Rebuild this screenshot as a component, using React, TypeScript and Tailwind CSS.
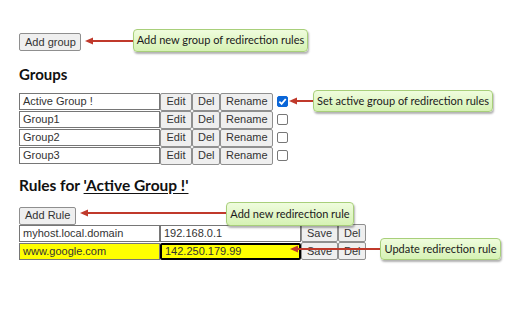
import React from 'react';

const btn =
  "h-[18px] px-[5px] bg-[#efefef] border border-[#8f8f8f] rounded-[2px] text-[11px] leading-none whitespace-nowrap text-[#333] font-['Liberation_Sans',Arial,sans-serif]";
const input =
  "h-[17px] w-[141px] px-[3px] border border-[#767676] text-[11px] leading-none whitespace-nowrap text-[#333] font-['Liberation_Sans',Arial,sans-serif] flex items-center";

function Callout({ text, className }: { text: string; className: string }) {
  return (
    <div
      className={`absolute flex items-center justify-center whitespace-nowrap rounded-[4px] border border-[#a8cf7a] bg-gradient-to-b from-[#effcdd] to-[#d6f2b4] shadow-[1px_2px_2px_rgba(0,0,0,0.3)] text-[11px] text-[#1a1a1a] font-['Lato',sans-serif] ${className}`}
    >
      {text}
    </div>
  );
}

function Arrow({ x1, x2, y }: { x1: number; x2: number; y: number }) {
  return (
    <svg className="absolute left-0 top-0 pointer-events-none" width={512} height={320}>
      <line x1={x1 + 6} y1={y} x2={x2} y2={y} stroke="#c0392b" strokeWidth={2} />
      <polygon points={`${x1},${y} ${x1 + 8},${y - 3.5} ${x1 + 8},${y + 3.5}`} fill="#c0392b" />
    </svg>
  );
}

const groups = ['Active Group !', 'Group1', 'Group2', 'Group3'];

export default function App() {
  return (
    <div className="relative w-[512px] h-[320px] bg-white overflow-hidden">
      <div className="pl-[19px] pt-[33px] flex flex-col items-start">
        <button className={`${btn} w-[62px] px-0`}>Add group</button>
        <h2 className="mt-[13px] text-[15px] font-bold text-[#111] font-['Lato',sans-serif] leading-[20px]">Groups</h2>
        <div className="mt-[9px] flex flex-col gap-[0.5px]">
          {groups.map((g, i) => (
            <div key={g} className="flex items-center h-[17.5px]">
              <div className={input}>{g}</div>
              <button className={`${btn} w-[32px] px-0`}>Edit</button>
              <button className={`${btn} w-[28px] px-0`}>Del</button>
              <button className={`${btn} w-[53px] px-0`}>Rename</button>
              <span
                className={`ml-[4px] w-[11px] h-[11px] rounded-[2px] border flex items-center justify-center ${
                  i === 0 ? 'bg-[#0a66d8] border-[#0a66d8]' : 'bg-white border-[#777]'
                }`}
              >
                {i === 0 && (
                  <svg width="9" height="9" viewBox="0 0 10 10">
                    <path d="M1.5 5.2 L4 7.6 L8.6 2.2" stroke="white" strokeWidth="2" fill="none" />
                  </svg>
                )}
              </span>
            </div>
          ))}
        </div>
        <h2 className="mt-[10px] text-[15.5px] font-bold text-[#111] font-['Lato',sans-serif] leading-[20px]">
          Rules for <span className="underline underline-offset-2">'Active Group !'</span>
        </h2>
        <button className={`${btn} mt-[12px] w-[57px] px-0`}>Add Rule</button>
        <div className="flex flex-col gap-[1px]">
          <div className="flex items-center h-[17px]">
            <div className={input}>myhost.local.domain</div>
            <div className={input}>192.168.0.1</div>
            <button className={`${btn} w-[37px] px-0`}>Save</button>
            <button className={`${btn} w-[28px] px-0`}>Del</button>
          </div>
          <div className="flex items-center h-[17px]">
            <div className={`${input} bg-[#ffff00]`}>www.google.com</div>
            <div className={`${input} bg-[#ffff00] border-2 border-black rounded-[2px]`}>142.250.179.99</div>
            <button className={`${btn} w-[37px] px-0`}>Save</button>
            <button className={`${btn} w-[28px] px-0`}>Del</button>
          </div>
        </div>
      </div>

      <Arrow x1={85} x2={133} y={41} />
      <Callout text="Add new group of redirection rules" className="left-[133px] top-[29px] w-[175px] h-[23px]" />

      <Arrow x1={289} x2={313} y={101} />
      <Callout text="Set active group of redirection rules" className="left-[313px] top-[90px] w-[180px] h-[22px]" />

      <Arrow x1={80} x2={226} y={213} />
      <Callout text="Add new redirection rule" className="left-[226px] top-[202px] w-[128px] h-[24px]" />

      <Arrow x1={290} x2={380} y={249} />
      <Callout text="Update redirection rule" className="left-[380px] top-[238px] w-[121px] h-[22px]" />
    </div>
  );
}
